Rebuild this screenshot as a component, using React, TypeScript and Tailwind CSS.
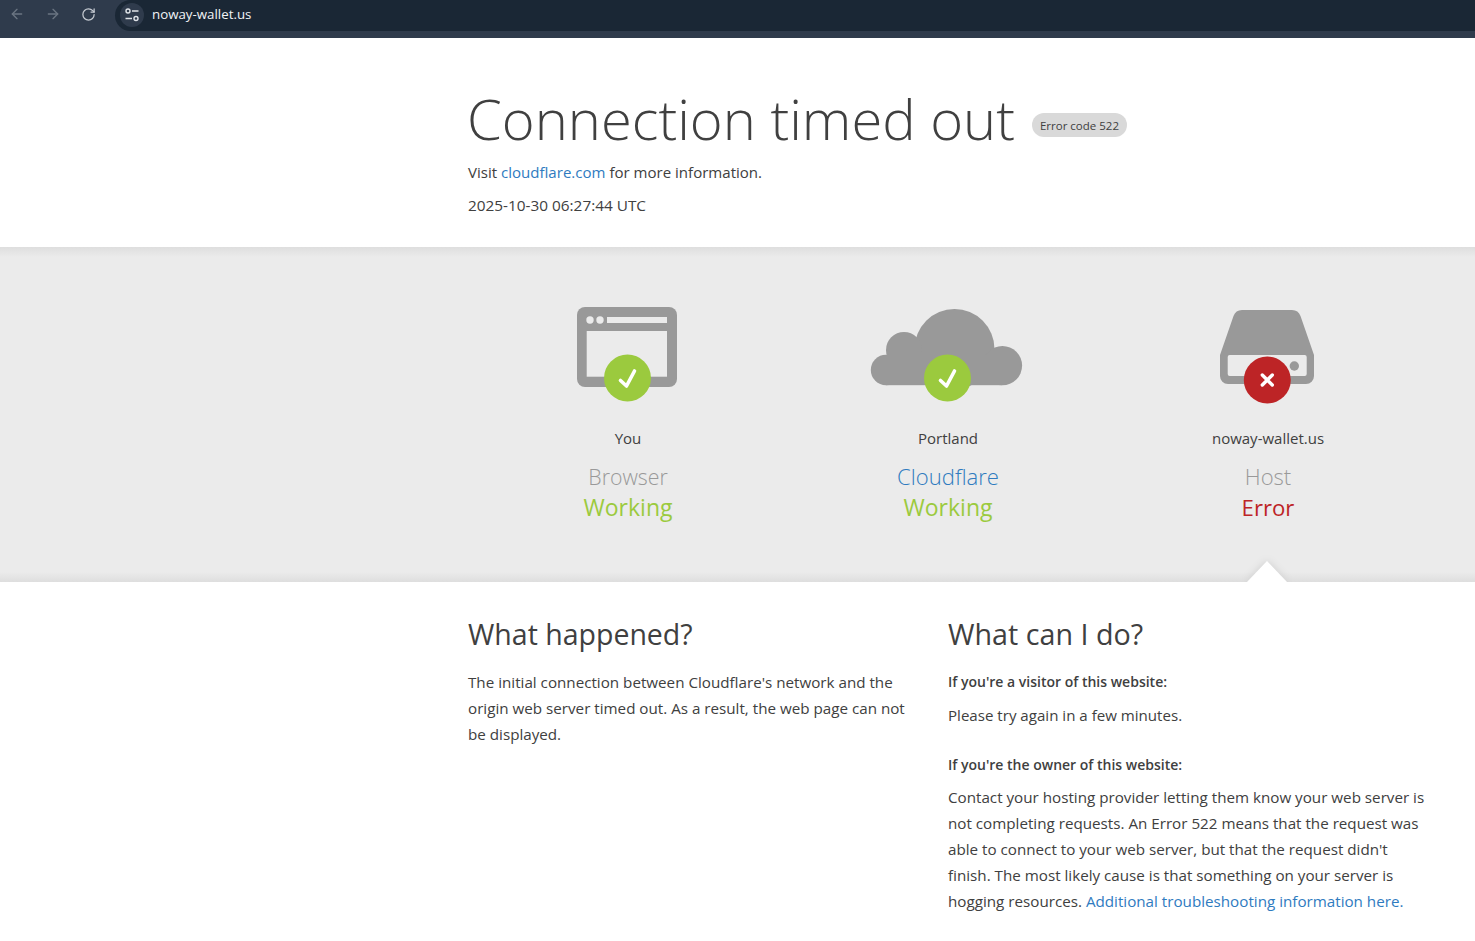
import { ArrowLeft, ArrowRight, RotateCw } from "lucide-react";

function TuneIcon() {
  return (
    <svg width="16" height="16" viewBox="0 0 16 16" fill="none" stroke="#dfe3e8" strokeWidth="1.4">
      <circle cx="4" cy="4" r="2" />
      <path d="M8 4h6.5M1.5 11.5H8" />
      <circle cx="12" cy="11.5" r="2" />
    </svg>
  );
}

function BrowserBar() {
  return (
    <div className="flex h-[38px] bg-[#2f3b4c] pb-[7px]">
      <div className="flex w-[115px] items-center gap-[20px] pb-[3px] pl-[9px]">
        <ArrowLeft size={16} className="text-[#6b7582]" />
        <ArrowRight size={16} className="text-[#6b7582]" />
        <RotateCw size={15} className="text-[#c5cad1]" />
      </div>
      <div className="flex flex-1 items-center rounded-l-[16px] bg-[#1a2735] pb-[2px] pl-[5px]">
        <div className="flex h-[24px] w-[24px] items-center justify-center rounded-full bg-[#2f3b4c]">
          <TuneIcon />
        </div>
        <span className="ml-[8px] text-[13.3px] text-[#f1f3f5]">noway-wallet.us</span>
      </div>
    </div>
  );
}

function Check() {
  return (
    <>
      <circle cx="79.5" cy="73" r="23.5" fill="#9bca3e" />
      <path d="M72.5 75.5l6 5.5 8-15" fill="none" stroke="#fff" strokeWidth="3.6" strokeLinecap="round" strokeLinejoin="round" />
    </>
  );
}

function BrowserIcon() {
  return (
    <svg width="160" height="100" viewBox="0 0 160 100" className="block">
      <rect x="29" y="2" width="100" height="80" rx="8" fill="#999" />
      <rect x="38.7" y="26" width="80.3" height="45.7" fill="#ebebeb" />
      <circle cx="42" cy="15" r="3.7" fill="#ebebeb" />
      <circle cx="52" cy="15" r="3.7" fill="#ebebeb" />
      <rect x="59" y="12" width="60" height="6" fill="#ebebeb" />
      <Check />
    </svg>
  );
}

function CloudIcon() {
  return (
    <svg width="160" height="100" viewBox="0 0 160 100" className="block">
      <g fill="#999">
        <circle cx="86.5" cy="44" r="40" />
        <circle cx="36" cy="45" r="18" />
        <circle cx="18" cy="65" r="15.2" />
        <circle cx="134.4" cy="60.6" r="19.7" />
        <rect x="18" y="50" width="116" height="30.2" />
      </g>
      <Check />
    </svg>
  );
}

function ServerIcon() {
  return (
    <svg width="160" height="100" viewBox="0 0 160 100" className="block">
      <path
        d="M54 5H104a9 9 0 0 1 8.5 6L126 50V71a8 8 0 0 1-8 8H40a8 8 0 0 1-8-8V50L45.5 11A9 9 0 0 1 54 5Z"
        fill="#999"
      />
      <rect x="39.7" y="50" width="79" height="21" rx="2" fill="#ebebeb" />
      <circle cx="106.3" cy="61" r="4.7" fill="#999" />
      <circle cx="79.3" cy="75" r="23.5" fill="#bd2426" />
      <path d="M74.3 70l10 10M84.3 70l-10 10" fill="none" stroke="#fff" strokeWidth="3.4" strokeLinecap="round" />
    </svg>
  );
}

function Status({
  icon,
  place,
  name,
  nameClass,
  status,
  statusClass,
}: {
  icon: React.ReactNode;
  place: string;
  name: string;
  nameClass: string;
  status: string;
  statusClass: string;
}) {
  return (
    <div className="flex w-[320px] flex-col items-center">
      {icon}
      <div className="mt-[20px] text-[15px] leading-[26px] text-[#404040]">{place}</div>
      <div className={`mt-[10px] leading-[30px] font-light ${nameClass}`}>{name}</div>
      <div className={`leading-[30px] ${statusClass}`}>{status}</div>
    </div>
  );
}

export default function App() {
  return (
    <div className="h-[941px] overflow-hidden bg-white font-['Open_Sans',sans-serif] text-[#404040]">
      <BrowserBar />

      <header className="pl-[468px] pt-[50px] pb-[29px]">
        <div className="flex items-center">
          <h1 className="-ml-px text-[56.1px] leading-[60px] font-light whitespace-nowrap">Connection timed out</h1>
          <span className="ml-[17px] mt-[14px] rounded-full bg-[#d9d9d9] px-[8px] pt-px text-[11.5px] leading-[23px]">
            Error code 522
          </span>
        </div>
        <p className="mt-[11px] text-[15.05px] leading-[26px]">
          Visit <span className="text-[#2f7bbf]">cloudflare.com</span> for more information.
        </p>
        <p className="mt-[7px] text-[15.35px] leading-[26px]">2025-10-30 06:27:44 UTC</p>
      </header>

      <section className="relative h-[335px] bg-[linear-gradient(#dedede,#ebebeb_3%,#ebebeb_97%,#dedede)] pl-[468px] pt-[58px]">
        <div className="flex">
          <Status
            icon={<BrowserIcon />}
            place="You"
            name="Browser"
            nameClass="pt-px -mb-px text-[21.3px] text-[#999]"
            status="Working"
            statusClass="mt-px text-[23px] text-[#9bca3e]"
          />
          <Status
            icon={<CloudIcon />}
            place="Portland"
            name="Cloudflare"
            nameClass="text-[22.1px] text-[#2f7bbf]"
            status="Working"
            statusClass="mt-px text-[23px] text-[#9bca3e]"
          />
          <Status
            icon={<ServerIcon />}
            place="noway-wallet.us"
            name="Host"
            nameClass="text-[22.1px] text-[#999]"
            status="Error"
            statusClass="mt-[2px] text-[22.2px] text-[#bd2426]"
          />
        </div>
        <div className="absolute bottom-0 left-[1247px] h-0 w-0 border-x-[20px] border-b-[21px] border-x-transparent border-b-white drop-shadow-[0_0_4px_rgba(0,0,0,0.12)]" />
      </section>

      <section className="relative flex bg-white pl-[468px] pt-[32px]">
        <div className="w-[480px]">
          <h2 className="text-[28.5px] leading-[40px]">What happened?</h2>
          <p className="mt-[15px] text-[15.2px] leading-[26px] whitespace-nowrap">
            The initial connection between Cloudflare's network and the
            <br />
            origin web server timed out. As a result, the web page can not
            <br />
            be displayed.
          </p>
        </div>
        <div className="w-[480px]">
          <h2 className="text-[28.7px] leading-[40px]">What can I do?</h2>
          <h3 className="mt-[15px] text-[14px] leading-[26px] font-semibold">If you're a visitor of this website:</h3>
          <p className="mt-[7px] text-[15.1px] leading-[26px]">Please try again in a few minutes.</p>
          <h3 className="mt-[24px] text-[14px] leading-[26px] font-semibold">If you're the owner of this website:</h3>
          <p className="mt-[6px] text-[15.2px] leading-[26px] whitespace-nowrap">
            Contact your hosting provider letting them know your web server is
            <br />
            not completing requests. An Error 522 means that the request was
            <br />
            able to connect to your web server, but that the request didn't
            <br />
            finish. The most likely cause is that something on your server is
            <br />
            hogging resources. <span className="text-[#2f7bbf]">Additional troubleshooting information here.</span>
          </p>
        </div>
      </section>
    </div>
  );
}
